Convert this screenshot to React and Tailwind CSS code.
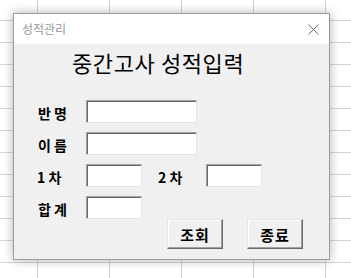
const ROWS = 14;
const COLS = 6;

const font = { fontFamily: '"Noto Sans CJK KR", "Noto Sans", sans-serif' };

function Sheet() {
    return (
        <div className="-ml-[34px] -mt-[1px]">
            {Array.from({ length: ROWS }).map((_, r) => (
                <div key={r} className="flex">
                    {Array.from({ length: COLS }).map((_, c) => (
                        <div
                            key={c}
                            className="h-[22px] w-[72px] shrink-0 border-r border-b border-[#d4d4d4]"
                        />
                    ))}
                </div>
            ))}
        </div>
    );
}

function Field({ width }) {
    return (
        <div
            className={`${width} h-[23px] shrink-0 border border-t-[#a0a0a0] border-l-[#a0a0a0] border-r-[#e3e3e3] border-b-[#e3e3e3] bg-white shadow-[inset_1px_1px_0_#696969]`}
        />
    );
}

function Label({ children, className = "" }) {
    return (
        <div className={`w-[48px] shrink-0 pt-[2px] text-[14px] font-bold leading-none text-black ${className}`}>
            {children}
        </div>
    );
}

function Button({ children }) {
    return (
        <button
            type="button"
            className="flex h-[30px] w-[56px] items-center justify-center border border-t-[#e3e3e3] border-l-[#e3e3e3] border-r-[#696969] border-b-[#696969] bg-[#f0f0f0] pt-[1px] text-[15px] font-bold leading-none tracking-[1px] text-black shadow-[inset_-1px_-1px_0_#a0a0a0,inset_1px_1px_0_#ffffff]"
        >
            {children}
        </button>
    );
}

export default function App() {
    return (
        <div className="relative h-[278px] w-[351px] overflow-hidden bg-white" style={font}>
            <Sheet />

            <div className="absolute left-[13px] top-[13px] flex h-[247px] w-[317px] flex-col border border-[#9b9b9b] bg-white shadow-[0_0_10px_rgba(0,0,0,0.3)]">
                <div className="flex h-[30px] shrink-0 items-center justify-between bg-white pl-[8px] pr-[10px]">
                    <span className="text-[12px] leading-none text-[#999999]">성적관리</span>
                    <svg width="11" height="11" viewBox="0 0 11 11">
                        <path d="M0.5 0.5 L10.5 10.5 M10.5 0.5 L0.5 10.5" stroke="#6b6b6b" strokeWidth="1" fill="none" />
                    </svg>
                </div>

                <div className="flex flex-1 flex-col bg-[#f0f0f0]">
                    <h1 className="mt-[7px] pl-[58px] text-[22px] font-normal leading-[22px] tracking-[0.6px] text-black">
                        중간고사 성적입력
                    </h1>

                    <div className="mt-[27px] flex flex-col gap-[9px] pl-[24px]">
                        <div className="flex items-center">
                            <Label>반 명</Label>
                            <Field width="w-[111px]" />
                        </div>
                        <div className="flex items-center">
                            <Label>이 름</Label>
                            <Field width="w-[111px]" />
                        </div>
                        <div className="flex items-center">
                            <Label className="-ml-[1px] w-[49px]">1 차</Label>
                            <Field width="w-[56px]" />
                            <Label className="ml-[16px]">2 차</Label>
                            <Field width="w-[56px]" />
                        </div>
                        <div className="flex items-center">
                            <Label>합 계</Label>
                            <Field width="w-[56px]" />
                        </div>
                    </div>

                    <div className="flex justify-end gap-[24px] pr-[26px]">
                        <Button>조회</Button>
                        <Button>종료</Button>
                    </div>
                </div>
            </div>
        </div>
    );
}
